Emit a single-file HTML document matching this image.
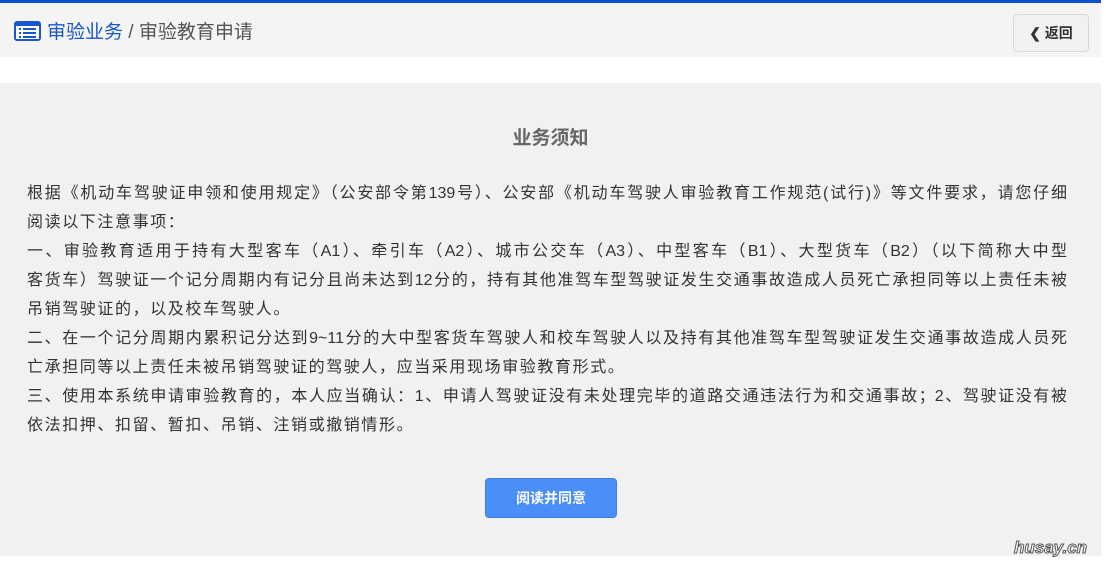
<!DOCTYPE html>
<html><head><meta charset="utf-8"><style>
*{margin:0;padding:0;box-sizing:border-box}
body{width:1106px;height:567px;background:#fff;font-family:"Liberation Sans","Noto Sans CJK SC",sans-serif;position:relative;overflow:hidden}
.top{position:absolute;left:0;top:0;width:1101px;height:3px;background:#0c4fcf}
.hdr{position:absolute;left:0;top:3px;width:1101px;height:54px;background:#f4f4f4}
.crumb{position:absolute;left:14px;top:18px;font-size:19px;line-height:24px;color:#555;white-space:nowrap}
.crumb .b{color:#1a56c9}
.icon{display:inline-block;vertical-align:-3px;margin-right:6px}
.back{position:absolute;left:1013px;top:11px;width:76px;height:38px;border:1px solid #d8d8d8;border-radius:4px;background:#f1f1f1;font-size:14px;font-weight:bold;color:#333;line-height:36px;text-align:center}
.panel{position:absolute;left:0;top:83px;width:1101px;height:473px;background:#f1f1f1}
h2{position:absolute;left:0;width:1101px;top:44px;text-align:center;font-size:19px;color:#666;font-weight:bold;line-height:24px}
.txt{position:absolute;left:27px;top:96px;width:1040px;font-size:16px;line-height:29px;color:#333;white-space:nowrap}
.txt div{height:29px}
.j{text-align:justify;text-align-last:justify}
.s{letter-spacing:1.6px}
.btn{position:absolute;left:485px;top:395px;width:132px;height:40px;border-radius:4px;background:#4a8ef7;border:1px solid #3c7fe8;color:#fff;font-size:14px;font-weight:bold;text-align:center;line-height:38px}
.wm{position:absolute;left:1014px;top:538px;font-size:17px;font-weight:bold;font-style:italic;color:#fff;-webkit-text-stroke:1px #555}
</style></head><body>
<div class="top"></div>
<div class="hdr">
<div class="crumb"><svg class="icon" width="27" height="20" viewBox="0 0 27 20"><rect x="1" y="1" width="25" height="18" rx="2" fill="#fff" stroke="#1a56c9" stroke-width="2"/><rect x="1" y="1" width="25" height="4" fill="#1a56c9"/><g fill="#1a56c9"><rect x="5" y="7" width="2" height="2"/><rect x="9" y="7" width="13" height="2"/><rect x="5" y="11" width="2" height="2"/><rect x="9" y="11" width="13" height="2"/><rect x="5" y="15" width="2" height="2"/><rect x="9" y="15" width="13" height="2"/></g></svg><span class="b">审验业务</span> / 审验教育申请</div>
<div class="back">❮ 返回</div>
</div>
<div class="panel">
<h2>业务须知</h2>
<div class="txt">
<div class="j">根据《机动车驾驶证申领和使用规定》（公安部令第139号）、公安部《机动车驾驶人审验教育工作规范(试行)》等文件要求，请您仔细</div>
<div class="s">阅读以下注意事项：</div>
<div class="j">一、审验教育适用于持有大型客车（A1）、牵引车（A2）、城市公交车（A3）、中型客车（B1）、大型货车（B2）（以下简称大中型</div>
<div class="j">客货车）驾驶证一个记分周期内有记分且尚未达到12分的，持有其他准驾车型驾驶证发生交通事故造成人员死亡承担同等以上责任未被</div>
<div class="s">吊销驾驶证的，以及校车驾驶人。</div>
<div class="j">二、在一个记分周期内累积记分达到9~11分的大中型客货车驾驶人和校车驾驶人以及持有其他准驾车型驾驶证发生交通事故造成人员死</div>
<div class="s">亡承担同等以上责任未被吊销驾驶证的驾驶人，应当采用现场审验教育形式。</div>
<div class="j">三、使用本系统申请审验教育的，本人应当确认：1、申请人驾驶证没有未处理完毕的道路交通违法行为和交通事故；2、驾驶证没有被</div>
<div class="s">依法扣押、扣留、暂扣、吊销、注销或撤销情形。</div>
</div>
<div class="btn">阅读并同意</div>
</div>
<div class="wm">husay.cn</div>
</body></html>
